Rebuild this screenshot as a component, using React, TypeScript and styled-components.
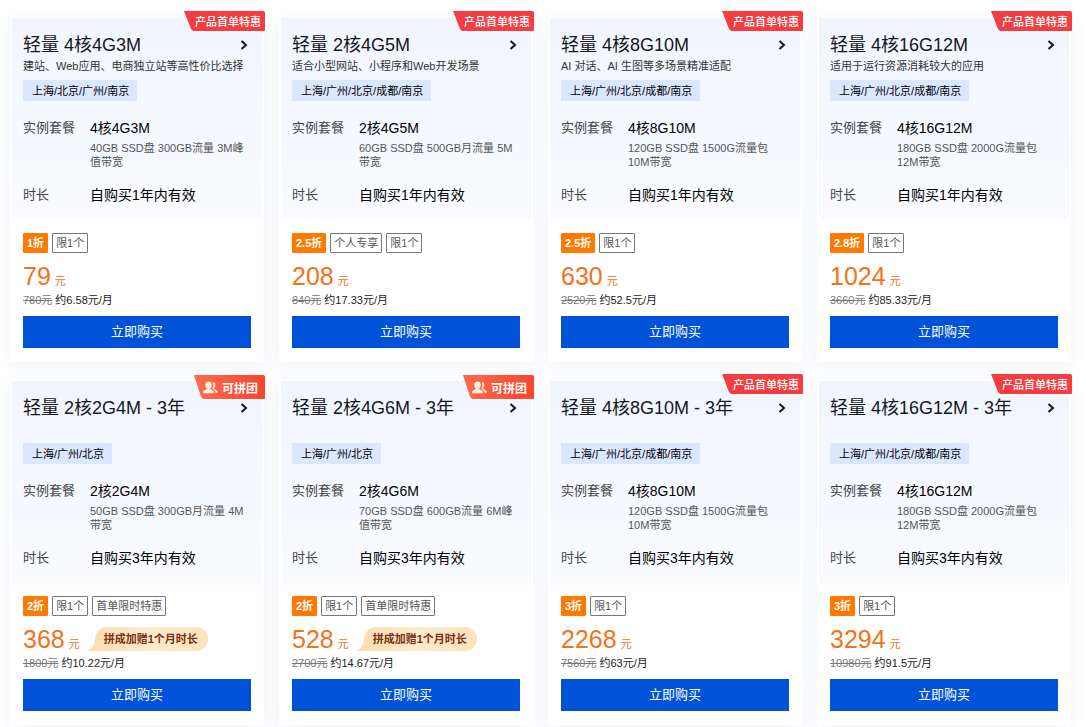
import React, { useId } from "react";
import styled, { createGlobalStyle } from "styled-components";

const GlobalStyle = createGlobalStyle`
  *, *::before, *::after { box-sizing: border-box; }
  body {
    margin: 0;
    background: #fff;
    color: #000;
    font-family: "Liberation Sans", "Noto Sans CJK SC", sans-serif;
    font-size: 11px;
  }
  h2, p, dl, dd, dt, ul { margin: 0; padding: 0; font-weight: 400; }
`;

const Grid = styled.main`
  display: grid;
  grid-template-columns: repeat(4, minmax(0, 1fr));
  gap: 17px 15px;
  padding: 16px 15px 2px 10px;
`;

const Card = styled.article`
  position: relative;
  display: flex;
  flex-direction: column;
  border: 2px solid #fff;
  background: #fff;
  box-shadow: 0 4px 16px rgba(70, 100, 190, 0.08);
`;

const Head = styled.div`
  display: flex;
  flex-direction: column;
  align-items: stretch;
  padding: 15px 11px 16px;
  background: linear-gradient(180deg, #f1f5fe 0%, #f9fbff 100%);
`;

const TitleLink = styled.a`
  display: flex;
  align-items: center;
  justify-content: space-between;
  color: #16181d;
  text-decoration: none;
`;

const Title = styled.h2`
  font-size: 18px;
  line-height: 24px;
`;

const Arrow = styled.svg`
  width: 8px;
  height: 12px;
  margin-right: 3px;
  fill: none;
  stroke: #16181d;
  stroke-width: 2;
`;

const Desc = styled.p`
  min-height: 20px;
  line-height: 18px;
  color: #333;
  white-space: nowrap;
`;

const Regions = styled.p`
  align-self: flex-start;
  margin-top: 3px;
  padding: 1px 8px 0 9px;
  line-height: 20px;
  background: #dbe6ff;
  color: #000;
`;

const Specs = styled.dl`
  display: grid;
  grid-template-columns: 67px 1fr;
  row-gap: 16px;
  margin-top: 17px;
`;

const Label = styled.dt`
  font-size: 13px;
  line-height: 20px;
  color: #444;
`;

const Value = styled.dd`
  font-size: 14px;
  line-height: 20px;
`;

const Detail = styled.p`
  margin-top: 3px;
  font-size: 11px;
  line-height: 14px;
  color: #555;
`;

const Foot = styled.div`
  display: flex;
  flex-direction: column;
  padding: 12px 11px 12px;
`;

const Tags = styled.ul`
  display: flex;
  gap: 4px;
  list-style: none;
`;

const Tag = styled.li<{ $solid?: boolean }>`
  padding: 0 3px;
  border: 1px solid ${(p) => (p.$solid ? "#ff7800" : "#777")};
  border-radius: 1px;
  line-height: 18px;
  background: ${(p) => (p.$solid ? "#ff7800" : "#fff")};
  color: ${(p) => (p.$solid ? "#fff" : "#555")};
  font-weight: ${(p) => (p.$solid ? 700 : 400)};
`;

const PriceRow = styled.div`
  display: flex;
  align-items: flex-start;
  gap: 7px;
  height: 31px;
  margin-top: 8px;
`;

const Price = styled.p`
  color: #f2731a;
  line-height: 30px;
  white-space: nowrap;
`;

const Amount = styled.span`
  margin-right: 4px;
  font-size: 25px;
`;

const Promo = styled.span`
  position: relative;
  margin-top: 3px;
  padding: 0 10px 0 17px;
  line-height: 24px;
  font-weight: 700;
  color: #7c3010;
  white-space: nowrap;
`;

const PromoShape = styled.svg`
  position: absolute;
  inset: 0;
  width: 100%;
  height: 100%;
`;

const PromoText = styled.span`
  position: relative;
`;

const Monthly = styled.p`
  line-height: 16px;
  color: #222;
`;

const Original = styled.del`
  margin-right: 3px;
  color: #777;
`;

const Buy = styled.button`
  height: 32px;
  margin-top: 8px;
  padding: 0 0 4px;
  border: 0;
  background: #0052d9;
  color: #fff;
  font-family: inherit;
  font-size: 13px;
  cursor: pointer;
`;

const Ribbon = styled.span<{ $group?: boolean }>`
  position: absolute;
  top: ${(p) => (p.$group ? -6 : -7)}px;
  right: -3px;
  display: flex;
  align-items: center;
  justify-content: flex-end;
  gap: 4px;
  width: ${(p) => (p.$group ? 71 : 81)}px;
  height: ${(p) => (p.$group ? 24 : 20)}px;
  padding-right: ${(p) => (p.$group ? 7 : 4)}px;
  border-radius: 0 2px 1px 0;
  clip-path: polygon(0 0, 100% 0, 100% 100%, 9px 100%, 7px 90%);
  background: ${(p) => (p.$group ? "linear-gradient(90deg, #ff6a4d, #f9452f)" : "#f33d40")};
  color: #fff;
  font-size: ${(p) => (p.$group ? 12 : 11)}px;
  font-weight: ${(p) => (p.$group ? 700 : 500)};
`;

const PeopleIcon = styled.svg`
  width: 15px;
  height: 13px;
  fill: #fff0dc;
`;

type Plan = {
  name: string;
  desc?: string;
  regions: string;
  spec: string;
  detail: string;
  years: number;
  discount: string;
  tags: string[];
  price: string;
  original: string;
  monthly: string;
  group?: boolean;
};

const plans: Plan[] = [
  { name: "轻量 4核4G3M", desc: "建站、Web应用、电商独立站等高性价比选择", regions: "上海/北京/广州/南京", spec: "4核4G3M", detail: "40GB SSD盘 300GB流量 3M峰值带宽", years: 1, discount: "1折", tags: ["限1个"], price: "79", original: "780元", monthly: "约6.58元/月" },
  { name: "轻量 2核4G5M", desc: "适合小型网站、小程序和Web开发场景", regions: "上海/广州/北京/成都/南京", spec: "2核4G5M", detail: "60GB SSD盘 500GB月流量 5M带宽", years: 1, discount: "2.5折", tags: ["个人专享", "限1个"], price: "208", original: "840元", monthly: "约17.33元/月" },
  { name: "轻量 4核8G10M", desc: "AI 对话、AI 生图等多场景精准适配", regions: "上海/广州/北京/成都/南京", spec: "4核8G10M", detail: "120GB SSD盘 1500G流量包 10M带宽", years: 1, discount: "2.5折", tags: ["限1个"], price: "630", original: "2520元", monthly: "约52.5元/月" },
  { name: "轻量 4核16G12M", desc: "适用于运行资源消耗较大的应用", regions: "上海/广州/北京/成都/南京", spec: "4核16G12M", detail: "180GB SSD盘 2000G流量包 12M带宽", years: 1, discount: "2.8折", tags: ["限1个"], price: "1024", original: "3660元", monthly: "约85.33元/月" },
  { name: "轻量 2核2G4M - 3年", regions: "上海/广州/北京", spec: "2核2G4M", detail: "50GB SSD盘 300GB月流量 4M带宽", years: 3, discount: "2折", tags: ["限1个", "首单限时特惠"], price: "368", original: "1800元", monthly: "约10.22元/月", group: true },
  { name: "轻量 2核4G6M - 3年", regions: "上海/广州/北京", spec: "2核4G6M", detail: "70GB SSD盘 600GB流量 6M峰值带宽", years: 3, discount: "2折", tags: ["限1个", "首单限时特惠"], price: "528", original: "2700元", monthly: "约14.67元/月", group: true },
  { name: "轻量 4核8G10M - 3年", regions: "上海/广州/北京/成都/南京", spec: "4核8G10M", detail: "120GB SSD盘 1500G流量包 10M带宽", years: 3, discount: "3折", tags: ["限1个"], price: "2268", original: "7560元", monthly: "约63元/月" },
  { name: "轻量 4核16G12M - 3年", regions: "上海/广州/北京/成都/南京", spec: "4核16G12M", detail: "180GB SSD盘 2000G流量包 12M带宽", years: 3, discount: "3折", tags: ["限1个"], price: "3294", original: "10980元", monthly: "约91.5元/月" },
];

function GroupPromo() {
  const gradient = useId();
  return (
    <Promo>
      <PromoShape viewBox="0 0 121 24" preserveAspectRatio="none" aria-hidden="true">
        <defs>
          <linearGradient id={gradient} x1="0" x2="1" y1="0" y2="0">
            <stop offset="0" stopColor="#fbdcae" />
            <stop offset="0.5" stopColor="#fdebcd" />
            <stop offset="1" stopColor="#fde3bd" />
          </linearGradient>
        </defs>
        <path
          d="M20 0 H109 A12 12 0 0 1 109 24 H0 C6 21 7 18 8 12 C9 5 13 0 20 0 Z"
          fill={`url(#${gradient})`}
        />
      </PromoShape>
      <PromoText>拼成加赠1个月时长</PromoText>
    </Promo>
  );
}

function PlanCard({ plan }: { plan: Plan }) {
  return (
    <Card>
      <Head>
        <TitleLink href="#">
          <Title>{plan.name}</Title>
          <Arrow viewBox="0 0 8 12" aria-hidden="true">
            <path d="M1.5 2 L6 6 L1.5 10" />
          </Arrow>
        </TitleLink>
        <Desc>{plan.desc}</Desc>
        <Regions>{plan.regions}</Regions>
        <Specs>
          <Label>实例套餐</Label>
          <Value>
            {plan.spec}
            <Detail>{plan.detail}</Detail>
          </Value>
          <Label>时长</Label>
          <Value>自购买{plan.years}年内有效</Value>
        </Specs>
      </Head>
      <Foot>
        <Tags>
          <Tag $solid>{plan.discount}</Tag>
          {plan.tags.map((t) => (
            <Tag key={t}>{t}</Tag>
          ))}
        </Tags>
        <PriceRow>
          <Price>
            <Amount>{plan.price}</Amount>元
          </Price>
          {plan.group && <GroupPromo />}
        </PriceRow>
        <Monthly>
          <Original>{plan.original}</Original>
          {plan.monthly}
        </Monthly>
        <Buy type="button">立即购买</Buy>
      </Foot>
      <Ribbon $group={plan.group}>
        {plan.group && (
          <PeopleIcon viewBox="0 0 15 13" aria-hidden="true">
            <path d="M5.5 0.5 C7.6 0.5 8.8 2 8.8 4 C8.8 5.4 8.2 6.6 7.4 7.3 V8.2 L10 9.5 C10.8 10 11 10.6 11 12.2 H0 C0 10.6 0.2 10 1 9.5 L3.6 8.2 V7.3 C2.8 6.6 2.2 5.4 2.2 4 C2.2 2 3.4 0.5 5.5 0.5 Z" />
            <path d="M9.6 1 C11.4 1 12.4 2.3 12.4 4.1 C12.4 5.4 11.9 6.4 11.2 7.1 V8 L13.6 9.3 C14.5 9.8 14.8 10.5 14.8 11.8 H12.2 C12.2 10.2 11.8 9.3 10.8 8.7 L9.2 7.8 C10.5 5.8 10.6 3 9.6 1 Z" />
          </PeopleIcon>
        )}
        {plan.group ? "可拼团" : "产品首单特惠"}
      </Ribbon>
    </Card>
  );
}

export default function App() {
  return (
    <>
      <GlobalStyle />
      <Grid>
        {plans.map((p) => (
          <PlanCard key={p.name} plan={p} />
        ))}
      </Grid>
    </>
  );
}
